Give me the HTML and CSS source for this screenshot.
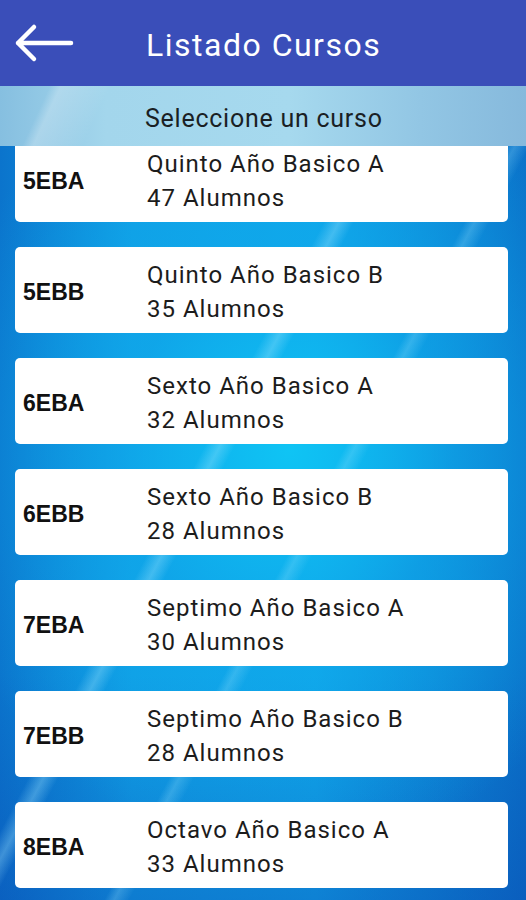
FILE: index.html
```html
<!DOCTYPE html>
<html lang="es">
<head>
    <meta charset="UTF-8">
    <meta name="viewport" content="width=device-width, initial-scale=1.0">
    <title>Listado Cursos</title>
    <link rel="stylesheet" href="styles.css">
</head>
<body>
    <div class="app">
        <header class="toolbar">
            <button class="back-btn" aria-label="Volver">
                <svg width="60" height="40" viewBox="0 0 60 40">
                    <path d="M4 20 H57 M4 20 L20 4 M4 20 L20 36" fill="none" stroke="#fff" stroke-width="4.5" stroke-linecap="round" stroke-linejoin="round"/>
                </svg>
            </button>
            <h1>Listado Cursos</h1>
        </header>
        <div class="subheader">Seleccione un curso</div>
        <main class="list">
            <div class="curso">
                <div class="code">5EBA</div>
                <div class="info">
                    <div>Quinto Año Basico A</div>
                    <div>47 Alumnos</div>
                </div>
            </div>
            <div class="curso">
                <div class="code">5EBB</div>
                <div class="info">
                    <div>Quinto Año Basico B</div>
                    <div>35 Alumnos</div>
                </div>
            </div>
            <div class="curso">
                <div class="code">6EBA</div>
                <div class="info">
                    <div>Sexto Año Basico A</div>
                    <div>32 Alumnos</div>
                </div>
            </div>
            <div class="curso">
                <div class="code">6EBB</div>
                <div class="info">
                    <div>Sexto Año Basico B</div>
                    <div>28 Alumnos</div>
                </div>
            </div>
            <div class="curso">
                <div class="code">7EBA</div>
                <div class="info">
                    <div>Septimo Año Basico A</div>
                    <div>30 Alumnos</div>
                </div>
            </div>
            <div class="curso">
                <div class="code">7EBB</div>
                <div class="info">
                    <div>Septimo Año Basico B</div>
                    <div>28 Alumnos</div>
                </div>
            </div>
            <div class="curso">
                <div class="code">8EBA</div>
                <div class="info">
                    <div>Octavo Año Basico A</div>
                    <div>33 Alumnos</div>
                </div>
            </div>
        </main>
    </div>
</body>
</html>
```

FILE: styles.css
```css
body {
    margin: 0;
    font-family: Roboto, "Liberation Sans", sans-serif;
    color: #1c1c1c;
}

.app {
    width: 526px;
    height: 900px;
    overflow: hidden;
    background:
        linear-gradient(118deg, transparent 44%, rgba(160, 230, 255, 0.35) 45.5%, transparent 47%),
        linear-gradient(118deg, transparent 58%, rgba(160, 230, 255, 0.25) 59%, transparent 60.5%),
        radial-gradient(ellipse 70% 45% at 55% 50%, #0fc4f4 0%, rgba(15, 170, 235, 0.6) 45%, rgba(15, 140, 220, 0) 100%),
        linear-gradient(180deg, rgba(10, 60, 170, 0) 75%, rgba(10, 60, 170, 0.35) 100%),
        linear-gradient(90deg, #0b74cc 0%, #109ee5 25%, #10a6ea 60%, #0a70c8 100%);
    background-color: #0b82d4;
}

.toolbar {
    height: 86px;
    background: #3a4eb9;
    display: flex;
    align-items: center;
    box-sizing: border-box;
    padding-left: 14px;
}

.back-btn {
    background: none;
    border: none;
    padding: 0;
    width: 60px;
    height: 40px;
    display: flex;
    cursor: pointer;
}

.toolbar h1 {
    margin: 4px 0 0 72px;
    color: #fff;
    font-size: 32px;
    font-weight: 400;
    letter-spacing: 1.5px;
}

.subheader {
    position: relative;
    z-index: 2;
    height: 60px;
    box-sizing: border-box;
    padding: 18px 0 0 145px;
    font-size: 25px;
    letter-spacing: 0.75px;
    color: #1a1f24;
    background:
        linear-gradient(115deg, transparent 9%, rgba(255, 255, 255, 0.25) 11%, transparent 20%),
        linear-gradient(90deg, #86bfe0 0%, #a3d6ec 20%, #a6d9ee 55%, #92c6e4 80%, #86b9dc 100%);
}

.list {
    display: flex;
    flex-direction: column;
    gap: 25px;
    margin-top: -10px;
    padding: 0 18px 0 15px;
}

.curso {
    height: 86px;
    background: #fff;
    border-radius: 5px;
    display: flex;
    align-items: center;
    box-sizing: border-box;
    padding: 0 8px;
}

.code {
    width: 124px;
    font-family: "Liberation Sans", Arial, sans-serif;
    font-weight: 700;
    font-size: 23px;
    padding-top: 4px;
    color: #111;
}

.info {
    font-size: 24px;
    line-height: 34px;
    letter-spacing: 1px;
    padding-top: 4px;
}
```
